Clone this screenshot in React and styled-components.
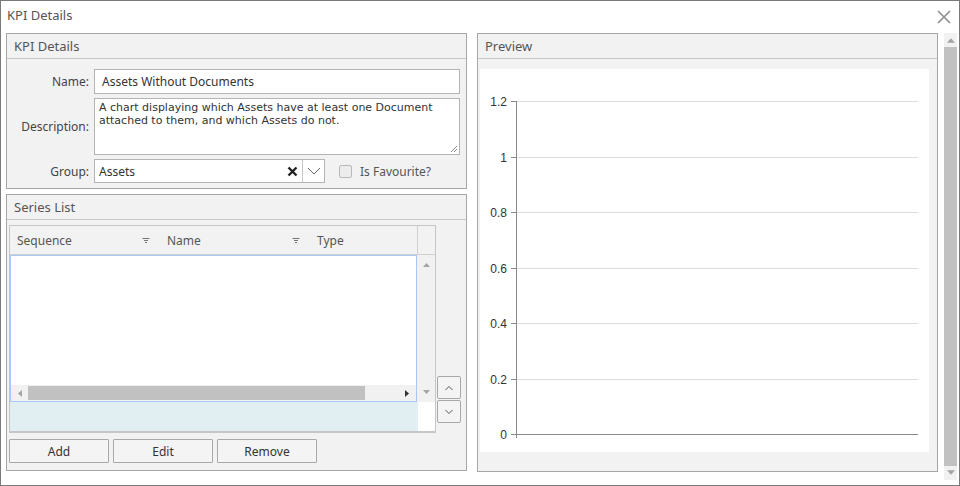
import styled, { createGlobalStyle } from 'styled-components';

const GlobalStyle = createGlobalStyle`
  html, body {
    margin: 0;
    padding: 0;
    background: #fff;
  }
  * {
    box-sizing: border-box;
  }
`;

const Window = styled.div`
  width: 960px;
  height: 486px;
  border: 1px solid #7a7a7a;
  background: #fff;
  display: flex;
  flex-direction: column;
  font-family: 'Noto Sans', 'Open Sans', sans-serif;
  font-size: 12px;
  color: #333;
`;

const TitleBar = styled.div`
  height: 32px;
  display: flex;
  align-items: center;
  justify-content: space-between;
  padding: 0 7px 4px 6px;
  font-size: 13px;
  color: #555;
`;

const CloseButton = styled.div`
  width: 16px;
  height: 16px;
  display: flex;
  align-items: center;
  justify-content: center;
  margin-top: 3px;
`;

const Body = styled.div`
  flex: 1;
  display: flex;
  padding: 0 2px 5px 5px;
  min-height: 0;
`;

const LeftColumn = styled.div`
  width: 461px;
  display: flex;
  flex-direction: column;
  gap: 5px;
`;

const Panel = styled.div`
  border: 1px solid #a6a6a6;
  background: #f2f2f2;
  display: flex;
  flex-direction: column;
  height: ${(p) => p.$height}px;
  width: 461px;
`;

const PanelHeader = styled.div`
  height: 25px;
  flex-shrink: 0;
  border-bottom: 1px solid #c6c6c6;
  padding: 0 7px;
  display: flex;
  align-items: center;
  font-size: 13px;
  color: #555;
`;

const Form = styled.div`
  display: flex;
  flex-direction: column;
  gap: 4px;
  padding: 10px 6px 0 0;
`;

const Row = styled.div`
  display: flex;
  align-items: center;
  gap: 5px;
`;

const Label = styled.label`
  width: 82px;
  text-align: right;
  color: #444;
  flex-shrink: 0;
`;

const TextInput = styled.div`
  flex: 1;
  height: 25px;
  border: 1px solid #b4b4b4;
  background: #fff;
  padding: 0 7px;
  display: flex;
  align-items: center;
  color: #333;
`;

const TextArea = styled.div`
  position: relative;
  flex: 1;
  height: 57px;
  border: 1px solid #b4b4b4;
  background: #fff;
  padding: 2px 4px;
  font-family: 'DejaVu Sans', Verdana, sans-serif;
  font-size: 11px;
  line-height: 13px;
  color: #333;
`;

const Grip = styled.svg`
  position: absolute;
  right: 1px;
  bottom: 1px;
`;

const Combo = styled.div`
  width: 231px;
  height: 24px;
  border: 1px solid #b4b4b4;
  background: #fff;
  display: flex;
`;

const ComboValue = styled.div`
  flex: 1;
  display: flex;
  align-items: center;
  justify-content: space-between;
  padding: 0 4px 0 4px;
`;

const ComboArrow = styled.div`
  width: 22px;
  border-left: 1px solid #c8c8c8;
  display: flex;
  align-items: center;
  justify-content: center;
`;

const CheckLabel = styled.label`
  display: flex;
  align-items: center;
  gap: 8px;
  margin-left: 9px;
  color: #555;
`;

const CheckBox = styled.span`
  width: 13px;
  height: 13px;
  border: 1px solid #b8b8b8;
  border-radius: 2px;
  background: #ececec;
`;

const SeriesBody = styled.div`
  flex: 1;
  display: flex;
  flex-direction: column;
  padding: 5px 0 0 2px;
`;

const GridRow = styled.div`
  display: flex;
  align-items: flex-end;
  gap: 1px;
`;

const Grid = styled.div`
  width: 427px;
  height: 208px;
  border: 1px solid #c6c6c6;
  border-bottom-width: 2px;
  background: #fff;
  display: flex;
  flex-direction: column;
`;

const GridHead = styled.div`
  height: 29px;
  display: flex;
  background: #f2f2f2;
  border-bottom: 1px solid #d0d0d0;
`;

const HeadCell = styled.div`
  width: ${(p) => p.$width}px;
  display: flex;
  align-items: center;
  justify-content: space-between;
  padding: 0 10px 0 7px;
  color: #555;
`;

const HeadFill = styled.div`
  flex: 1;
  display: flex;
`;

const HeadCorner = styled.div`
  width: 18px;
  border-left: 1px solid #d0d0d0;
`;

const GridMiddle = styled.div`
  display: flex;
  height: 147px;
`;

const GridContent = styled.div`
  flex: 1;
  border: 1px solid #a8c8f8;
  display: flex;
  flex-direction: column;
`;

const GridRows = styled.div`
  flex: 1;
`;

const HScroll = styled.div`
  height: 16px;
  background: #f1f1f1;
  display: flex;
  align-items: center;
  padding: 0 6px;
  gap: 3px;
`;

const HThumb = styled.div`
  width: 337px;
  height: 14px;
  background: #c1c1c1;
  margin-left: 1px;
`;

const ScrollGap = styled.span`
  flex: 1;
`;

const VScroll = styled.div`
  width: 18px;
  background: #f1f1f1;
  display: flex;
  flex-direction: column;
  justify-content: space-between;
  align-items: center;
  padding: 6px 0 6px;
`;

const GridFooter = styled.div`
  flex: 1;
  display: flex;
`;

const FooterFill = styled.div`
  flex: 1;
  background: #e1eef2;
`;

const FooterCorner = styled.div`
  width: 17px;
  background: #fff;
`;

const MoveButtons = styled.div`
  display: flex;
  flex-direction: column;
  gap: 1px;
  margin-bottom: 10px;
`;

const MoveButton = styled.div`
  width: 24px;
  height: 23px;
  border: 1px solid #a8a8a8;
  border-radius: 2px;
  background: #f4f4f4;
  display: flex;
  align-items: center;
  justify-content: center;
`;

const ButtonRow = styled.div`
  display: flex;
  gap: 4px;
  margin-top: 6px;
`;

const Button = styled.div`
  width: 100px;
  height: 24px;
  border: 1px solid #a8a8a8;
  border-radius: 1px;
  background: #f4f4f4;
  display: flex;
  align-items: center;
  justify-content: center;
  color: #333;
`;

const PreviewPanel = styled(Panel)`
  margin-left: 10px;
`;

const PreviewBody = styled.div`
  flex: 1;
  padding: 10px 8px 19px 2px;
  display: flex;
  min-height: 0;
`;

const ChartArea = styled.div`
  flex: 1;
  background: #fff;
  overflow: hidden;
`;

const PageScroll = styled.div`
  width: 15px;
  margin-left: 6px;
  background: #f1f1f1;
  display: flex;
  flex-direction: column;
  align-items: center;
  justify-content: space-between;
  padding: 3px 0 3px;
  gap: 3px;
`;

const PageThumb = styled.div`
  flex: 1;
  width: 13px;
  background: #c1c1c1;
`;

const Tri = ({ dir, color = '#a3a3a3', size = 7 }) => {
  const pts = {
    up: '0,6 7,6 3.5,2',
    down: '0,1 7,1 3.5,5',
    left: '5,0 5,7 1,3.5',
    right: '2,0 2,7 6,3.5',
  }[dir];
  return (
    <svg width={size} height={size} viewBox="0 0 7 7">
      <polygon points={pts} fill={color} />
    </svg>
  );
};

const FilterIcon = () => (
  <svg width="8" height="7" viewBox="0 0 8 7">
    <path d="M0.5 1.5h7M2 3.5h4M3 5.5h2" stroke="#777" strokeWidth="1" />
  </svg>
);

const Chevron = ({ up }) => (
  <svg width="10" height="6" viewBox="0 0 10 6">
    <path
      d={up ? 'M1.5 5L5 1.5L8.5 5' : 'M1.5 1L5 4.5L8.5 1'}
      fill="none"
      stroke="#555"
      strokeWidth="1"
    />
  </svg>
);

const ticks = [1.2, 1, 0.8, 0.6, 0.4, 0.2, 0];

const Chart = () => {
  const top = 32;
  const step = 55.5;
  const axisX = 36;
  const right = 438;
  return (
    <svg width="449" height="384" viewBox="0 0 449 384">
      {ticks.map((t, i) => {
        const y = Math.round(top + i * step) + 0.5;
        const isZero = t === 0;
        return (
          <g key={t}>
            <line
              x1={axisX}
              x2={right}
              y1={y}
              y2={y}
              stroke={isZero ? '#8a8a8a' : '#dcdcdc'}
              strokeWidth="1"
            />
            <line x1={axisX - 5} x2={axisX} y1={y} y2={y} stroke="#8a8a8a" />
            <text
              x={axisX - 9}
              y={y + 4}
              textAnchor="end"
              fontFamily="'Liberation Sans', Arial, sans-serif"
              fontSize="12"
              fill="#333"
            >
              {t}
            </text>
          </g>
        );
      })}
      <line
        x1={axisX + 0.5}
        x2={axisX + 0.5}
        y1={top}
        y2={top + 6 * step + 4}
        stroke="#8a8a8a"
      />
    </svg>
  );
};

export default function App() {
  return (
    <>
      <GlobalStyle />
      <Window>
        <TitleBar>
          <span>KPI Details</span>
          <CloseButton>
            <svg width="14" height="14" viewBox="0 0 14 14">
              <path d="M1 1L13 13M13 1L1 13" stroke="#8c8c8c" strokeWidth="1.6" />
            </svg>
          </CloseButton>
        </TitleBar>
        <Body>
          <LeftColumn>
            <Panel $height={156}>
              <PanelHeader>KPI Details</PanelHeader>
              <Form>
                <Row>
                  <Label>Name:</Label>
                  <TextInput>Assets Without Documents</TextInput>
                </Row>
                <Row>
                  <Label>Description:</Label>
                  <TextArea>
                    A chart displaying which Assets have at least one Document
                    attached to them, and which Assets do not.
                    <Grip width="8" height="8" viewBox="0 0 8 8">
                      <path d="M7 1L1 7M7 4L4 7" stroke="#888" strokeWidth="1" />
                    </Grip>
                  </TextArea>
                </Row>
                <Row>
                  <Label>Group:</Label>
                  <Combo>
                    <ComboValue>
                      <span>Assets</span>
                      <svg width="11" height="11" viewBox="0 0 11 11">
                        <path d="M1.5 1.5L9.5 9.5M9.5 1.5L1.5 9.5" stroke="#222" strokeWidth="2.4" />
                      </svg>
                    </ComboValue>
                    <ComboArrow>
                      <svg width="14" height="8" viewBox="0 0 14 8">
                        <path d="M1 1L7 7L13 1" fill="none" stroke="#666" strokeWidth="1" />
                      </svg>
                    </ComboArrow>
                  </Combo>
                  <CheckLabel>
                    <CheckBox />
                    Is Favourite?
                  </CheckLabel>
                </Row>
              </Form>
            </Panel>
            <Panel $height={277}>
              <PanelHeader>Series List</PanelHeader>
              <SeriesBody>
                <GridRow>
                  <Grid>
                    <GridHead>
                      <HeadCell $width={150}>
                        Sequence
                        <FilterIcon />
                      </HeadCell>
                      <HeadCell $width={150}>
                        Name
                        <FilterIcon />
                      </HeadCell>
                      <HeadFill>
                        <HeadCell $width={100}>Type</HeadCell>
                      </HeadFill>
                      <HeadCorner />
                    </GridHead>
                    <GridMiddle>
                      <GridContent>
                        <GridRows />
                        <HScroll>
                          <Tri dir="left" />
                          <HThumb />
                          <ScrollGap />
                          <Tri dir="right" color="#333" />
                        </HScroll>
                      </GridContent>
                      <VScroll>
                        <Tri dir="up" />
                        <Tri dir="down" />
                      </VScroll>
                    </GridMiddle>
                    <GridFooter>
                      <FooterFill />
                      <FooterCorner />
                    </GridFooter>
                  </Grid>
                  <MoveButtons>
                    <MoveButton>
                      <Chevron up />
                    </MoveButton>
                    <MoveButton>
                      <Chevron />
                    </MoveButton>
                  </MoveButtons>
                </GridRow>
                <ButtonRow>
                  <Button>Add</Button>
                  <Button>Edit</Button>
                  <Button>Remove</Button>
                </ButtonRow>
              </SeriesBody>
            </Panel>
          </LeftColumn>
          <PreviewPanel $height={439}>
            <PanelHeader>Preview</PanelHeader>
            <PreviewBody>
              <ChartArea>
                <Chart />
              </ChartArea>
            </PreviewBody>
          </PreviewPanel>
          <PageScroll>
            <Tri dir="up" size={8} />
            <PageThumb />
            <Tri dir="down" size={8} />
          </PageScroll>
        </Body>
      </Window>
    </>
  );
}
